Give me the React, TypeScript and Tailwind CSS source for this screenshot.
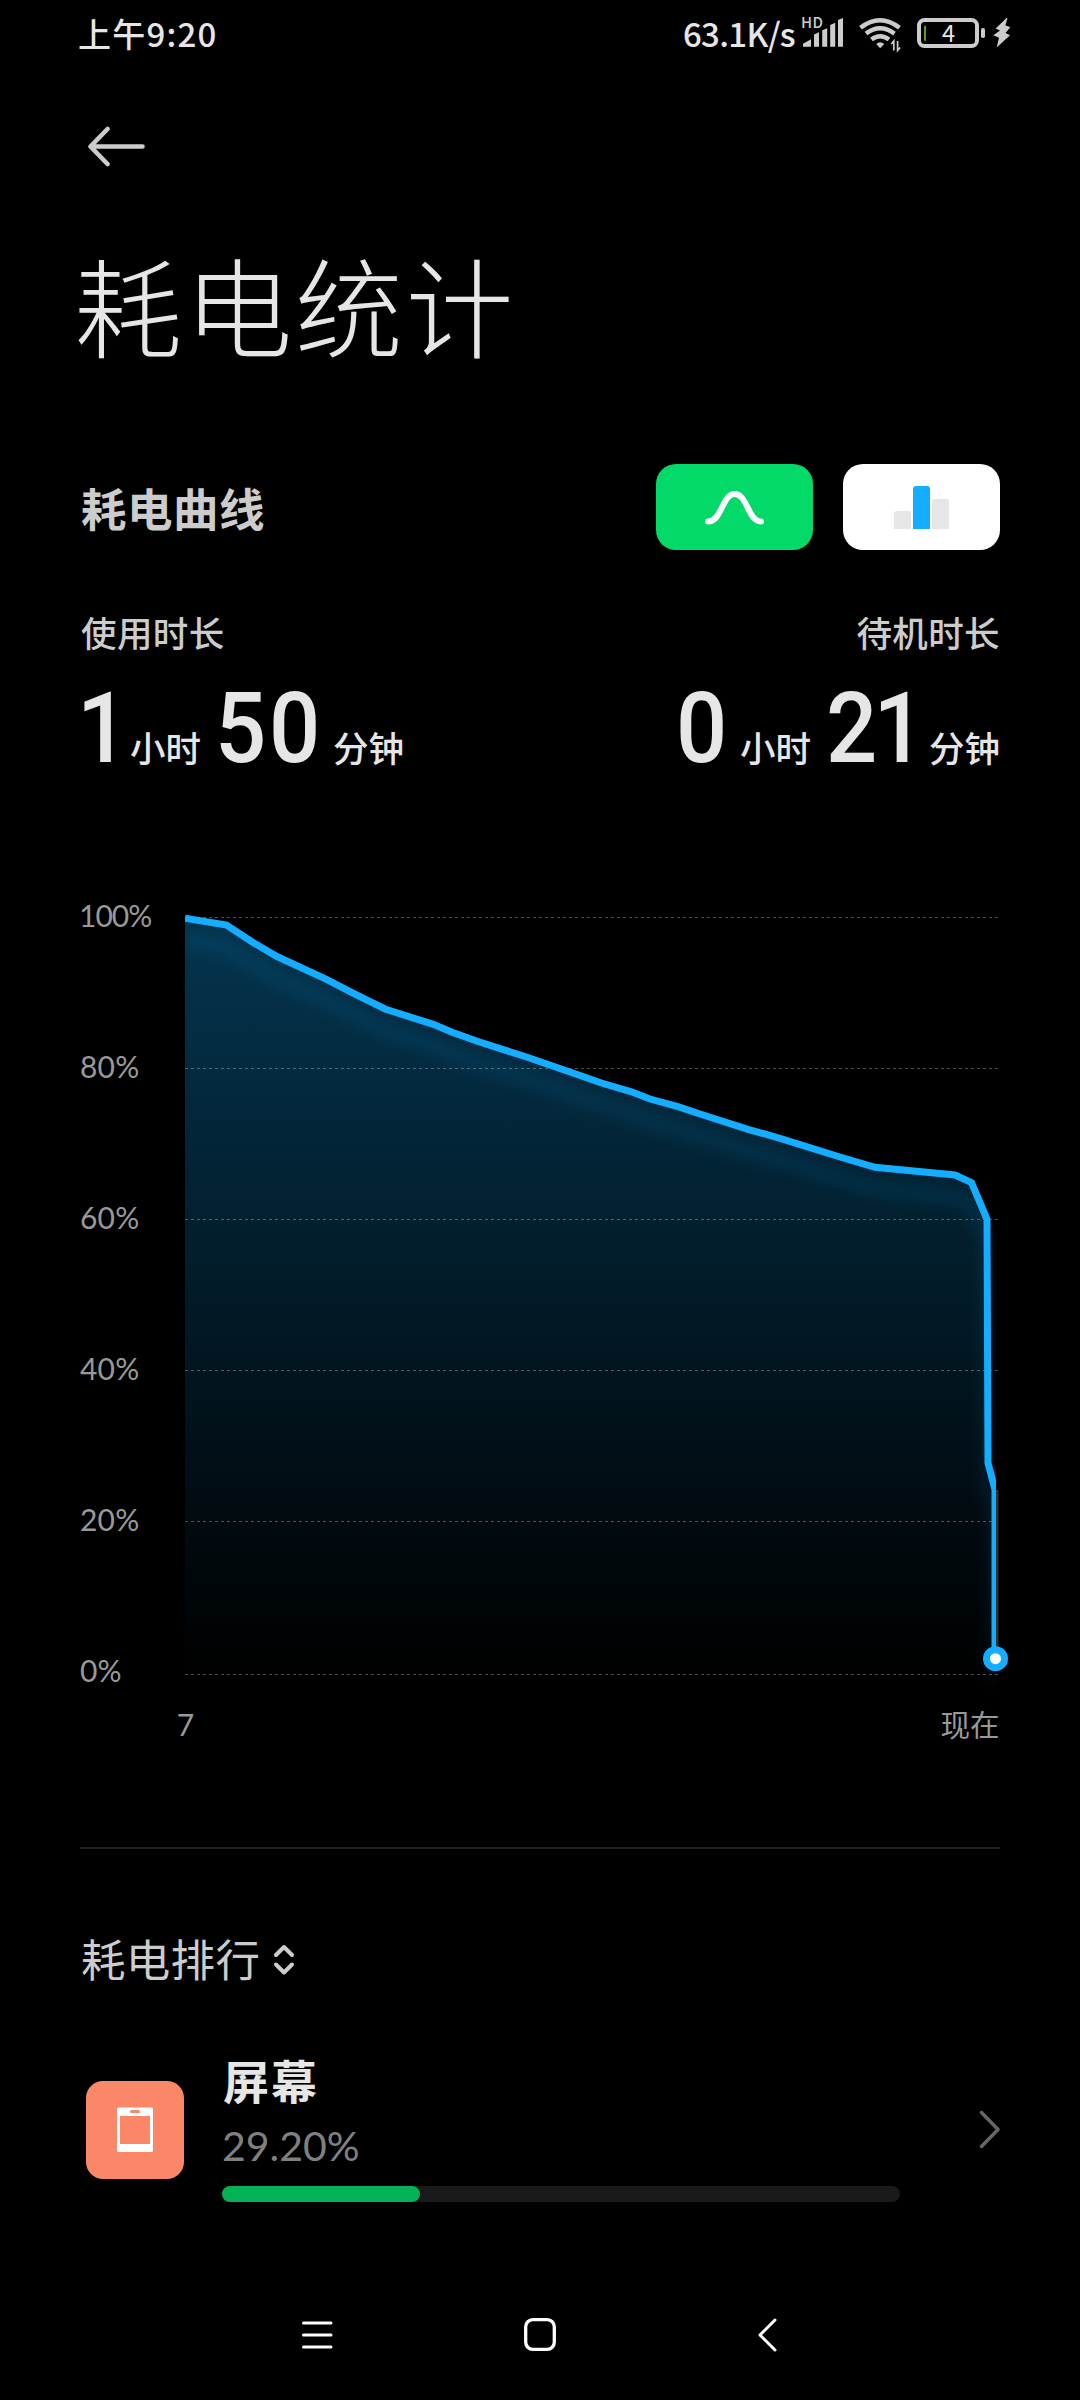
import type { ReactNode } from "react";

const gridLines = [917, 1068, 1219, 1370, 1521, 1674];

// Battery level over time, in screen pixels
const curve: [number, number][] = [
  [185, 918.3],
  [226.5, 925],
  [251.5, 941.5],
  [276.5, 956.3],
  [326.5, 979.3],
  [351.5, 992.3],
  [385, 1009],
  [433.3, 1024.3],
  [451.5, 1032],
  [476.5, 1041],
  [526.5, 1057],
  [570, 1072],
  [601.5, 1083],
  [631.5, 1091.8],
  [650, 1099],
  [678, 1106.7],
  [700, 1114],
  [748, 1129.3],
  [780, 1138.3],
  [840, 1157],
  [875, 1167.3],
  [955, 1175],
  [971.5, 1182.7],
  [987, 1219.3],
  [988, 1463],
  [995, 1489.5],
  [995, 1658],
];

const points = curve.map((p) => p.join(",")).join(" ");

function StatusBar() {
  return (
    <div className="flex h-[66px] items-center justify-between pr-[69px] pl-[78px] text-[#e6e6e6]">
      <span className="text-[33px] leading-[64px] font-medium tracking-[1.200px]">上午9:20</span>
      <div className="flex h-full items-center">
        <span className="text-[33px] leading-[64px] font-medium tracking-[-0.700px]">63.1K/s</span>
        <svg width="44" height="66" viewBox="800 0 44 66" fill="#ccc" className="ml-[5px]">
          <text x="801" y="28" fontSize="15" fontWeight="500" letterSpacing="0.3">HD</text>
          <path d="M803 46.700v-3l8-4.500v7.500zM814 46.700V34.500l5-2.200v14.400zM822.200 46.700V30.200l5-2v18.500zM830.200 46.700V25l5-2.200v23.900zM838 46.700V20l5-2v28.700z" />
        </svg>
        <svg width="44" height="66" viewBox="858 0 44 66" fill="none" stroke="#ccc" strokeWidth="4.400" className="ml-[14px]">
          <path d="M860.500 27.800q19.500-15 39 0M866 33.600q14-10.500 28.500 0M871.500 39.500q8.700-6.500 17.500 0" />
          <path d="M880.200 48.200l-4-4.200q4-3.400 8 0z" fill="#ccc" stroke="none" />
          <path d="M893.800 50.500v-9.500l-2.500 3M897.600 41v9.500l2.600-3" strokeWidth="1.700" />
        </svg>
        <svg width="96" height="66" viewBox="915 0 96 66" fill="none" className="ml-[13px]">
          <rect x="919" y="20" width="58" height="26" rx="5.500" stroke="#ccc" strokeWidth="4" />
          <rect x="924" y="25.500" width="2" height="15.500" rx="1" fill="#4fa31b" />
          <text x="948.500" y="41.800" fontSize="23.500" fontWeight="400" textAnchor="middle" fill="#e6e6e6">4</text>
          <rect x="981" y="28" width="4" height="10" rx="1.800" fill="#ccc" />
          <path d="M1006.500 18L995.700 28.500l4.300 2-6.700 4.800 5.700 2.500-2.300 9.700L1010 35.300l-4.500-2.300 4.800-5.700-5-2 2.200-7z" fill="#ccc" />
        </svg>
      </div>
    </div>
  );
}

function ModeButton({ className, children }: { className: string; children: ReactNode }) {
  return (
    <button className={`flex h-[86px] w-[157px] items-center justify-center rounded-[20px] ${className}`}>
      {children}
    </button>
  );
}

function Digits({ value, className }: { value: number; className: string }) {
  return (
    <span className={`font-[Roboto] text-[98px] leading-[96px] font-medium ${className}`}>
      <span className="inline-block origin-left scale-x-[0.92]">{value}</span>
    </span>
  );
}

function Unit({ children }: { children: ReactNode }) {
  return <span className="w-[71px] text-[35.500px] font-medium whitespace-nowrap">{children}</span>;
}

function BatteryChart() {
  return (
    <svg width="1080" height="880" viewBox="0 880 1080 880" className="block">
      <defs>
        <linearGradient id="area" x1="0" y1="917" x2="0" y2="1674" gradientUnits="userSpaceOnUse">
          <stop offset="0" stopColor="#0daaff" stopOpacity="0.31" />
          <stop offset="1" stopColor="#0daaff" stopOpacity="0" />
        </linearGradient>
        <filter id="glow" x="100" y="850" width="960" height="900" filterUnits="userSpaceOnUse">
          <feGaussianBlur stdDeviation="7" />
        </filter>
        <clipPath id="plot">
          <rect x="185" y="900" width="811" height="800" />
        </clipPath>
      </defs>
      <polygon points={`${points} 995,1674 185,1674`} fill="url(#area)" />
      <g clipPath="url(#plot)">
        <polyline
          points={points}
          transform="translate(0 22)"
          fill="none"
          stroke="#14adff"
          strokeOpacity="0.1"
          strokeWidth="13"
          filter="url(#glow)"
        />
      </g>
      {gridLines.map((y) => (
        <line key={y} x1="185" x2="998" y1={y + 0.5} y2={y + 0.5} stroke="#fff" strokeOpacity="0.3" strokeDasharray="3 3" />
      ))}
      <rect x="996" y="1490" width="2.500" height="168" fill="#333" />
      <g clipPath="url(#plot)">
        <polyline points={points} fill="none" stroke="#14adff" strokeWidth="7" />
      </g>
      <circle cx="995.500" cy="1658.700" r="9" fill="#fff" stroke="#14adff" strokeWidth="7" />
      <g fill="#999" className="font-[Lato]" fontSize="30">
        {gridLines.map((y, i) => (
          <text key={y} x={i === 0 ? 79 : 80} y={y + (i === 5 ? 7.5 : 9.5)} letterSpacing={i === 0 ? -1 : 0.2}>
            {100 - i * 20}%
          </text>
        ))}
        <text x="185.500" y="1736" textAnchor="middle">7</text>
      </g>
      <text x="999.500" y="1736" textAnchor="end" fontSize="29.500" fill="#999">现在</text>
    </svg>
  );
}

function RankItem({ name, percent }: { name: string; percent: number }) {
  return (
    <div className="flex h-[146px] items-start pr-[79px] pl-[86px]">
      <div className="mt-[25px] flex size-[98px] items-center justify-center rounded-[17px] bg-[#fa8768]">
        <svg width="38" height="46" viewBox="0 0 38 46">
          <path fillRule="evenodd" fill="#fff" d="M2.500 0.500h33q1.500 0 1.500 1.500v41.500q0 1.500-1.500 1.500h-33q-1.500 0-1.500-1.500v-41.500q0-1.500 1.500-1.500zM4 9v28h30v-28zM15.500 3q-1.500 0-1.500 1.500t1.500 1.500h7q1.500 0 1.500-1.500t-1.500-1.500z" />
        </svg>
      </div>
      <div className="ml-[38px] flex w-[678px] flex-col">
        <span className="-mt-[3px] ml-px text-[46px] leading-[52px] font-bold tracking-[2px] text-[#e6e6e6]">{name}</span>
        <span className="mt-[15px] font-[Lato] text-[41px] leading-[52px] text-[#808080]">{percent.toFixed(2)}%</span>
        <div className="mt-[14px] h-4 rounded-full bg-[#1a1a1a]">
          <div className="h-4 rounded-full bg-[#03b256]" style={{ width: `${percent}%` }} />
        </div>
      </div>
      <svg width="22" height="38" viewBox="0 0 22 38" fill="none" stroke="#666" strokeWidth="3.500" strokeLinecap="round" strokeLinejoin="round" className="mt-[54px] ml-auto">
        <path d="M2.500 2.500l16.500 17-16.500 17" />
      </svg>
    </div>
  );
}

export default function App() {
  return (
    <div className="flex h-[2400px] w-[1080px] flex-col overflow-hidden bg-black font-['Noto_Sans_CJK_SC',sans-serif]">
      <StatusBar />
      <header className="h-[314px]">
        <svg width="60" height="42" viewBox="0 0 60 42" fill="none" stroke="#ccc" strokeWidth="4.600" strokeLinecap="round" strokeLinejoin="round" className="mt-[59px] ml-[88px]">
          <path d="M19.500 4l-17 17.500 17 17.500M3 21.500h51.500" />
        </svg>
        <h1 className="mt-[71px] ml-[74px] text-[108px] leading-[130px] font-extralight tracking-[2.500px] text-[#e6e6e6]">耗电统计</h1>
      </header>
      <section className="mt-[84px] flex h-[86px] items-center justify-between px-[80px]">
        <h2 className="ml-px text-[45.500px] leading-[60px] font-bold tracking-[0.500px] text-[#ccc]">耗电曲线</h2>
        <div className="flex gap-[30px]">
          <ModeButton className="bg-[#03d968]">
            <svg width="60" height="36" viewBox="0 0 60 36" fill="none" stroke="#fff" strokeWidth="6" strokeLinecap="round" className="mt-[1px]">
              <path d="M3 31.500C17 31.500 17 4 29.700 4S43 31.500 56 31.500" />
            </svg>
          </ModeButton>
          <ModeButton className="bg-white">
            <div className="flex h-[43px] items-end gap-[2px]">
              <div className="h-[18px] w-[17px] rounded-t-[3px] bg-[#e6e6e6]" />
              <div className="h-[43px] w-[17px] rounded-t-[3px] bg-[#14adff]" />
              <div className="h-[30px] w-[17px] rounded-t-[3px] bg-[#e6e6e6]" />
            </div>
          </ModeButton>
        </div>
      </section>
      <section className="mt-[57px] flex h-[170px] justify-between px-[80px]">
        <div className="flex flex-col">
          <span className="ml-px text-[35.500px] leading-[50px] font-medium tracking-[0.400px] text-[#ccc]">使用时长</span>
          <div className="mt-[24px] flex h-[96px] items-baseline text-[#e6e6e6]">
            <Digits value={1} className="-ml-[3px] w-[42px]" />
            <span className="w-[11px]" />
            <Unit>小时</Unit>
            <Digits value={50} className="ml-[14px] w-[106px] tracking-[3px]" />
            <span className="w-[12px]" />
            <Unit>分钟</Unit>
          </div>
        </div>
        <div className="flex flex-col items-end">
          <span className="text-[35.500px] leading-[50px] font-medium tracking-[0.400px] text-[#ccc]">待机时长</span>
          <div className="mt-[24px] flex h-[96px] items-baseline text-[#e6e6e6]">
            <Digits value={0} className="w-[52px]" />
            <span className="w-[12px]" />
            <Unit>小时</Unit>
            <Digits value={21} className="ml-[15px] w-[91px] tracking-[-4px]" />
            <span className="w-[12px]" />
            <Unit>分钟</Unit>
          </div>
        </div>
      </section>
      <div className="mt-[103px] h-[880px]">
        <BatteryChart />
      </div>
      <div className="mx-[80px] mt-[87px] h-[2px] shrink-0 bg-[#1f1f1f]" />
      <div className="mt-[81px] flex h-[60px] items-center pl-[81px] text-[#ccc]">
        <span className="-mt-[4px] text-[44.500px] leading-[60px] tracking-[0.300px]">耗电排行</span>
        <svg width="22" height="32" viewBox="0 0 22 32" fill="none" stroke="#ccc" strokeWidth="4" strokeLinecap="round" strokeLinejoin="round" className="ml-[13px]">
          <path d="M3 11l8-8 8 8M3 20.500l8 8 8-8" />
        </svg>
      </div>
      <div className="mt-[66px]">
        <RankItem name="屏幕" percent={29.2} />
      </div>
      <nav className="mt-auto flex h-[130px] items-center pl-[301px]">
        <svg width="32" height="34" viewBox="0 0 32 34" stroke="#fff" strokeWidth="3" strokeLinecap="round">
          <path d="M2.500 5h27.500M2.500 17h27.500M2.500 29h27.500" />
        </svg>
        <svg width="34" height="36" viewBox="0 0 34 36" fill="none" stroke="#fff" strokeWidth="3.300" className="ml-[190px]">
          <rect x="2.700" y="2.700" width="28.600" height="29.600" rx="7" />
        </svg>
        <svg width="20" height="34" viewBox="0 0 20 34" fill="none" stroke="#fff" strokeWidth="3" strokeLinecap="round" strokeLinejoin="round" className="ml-[200px]">
          <path d="M18 2l-15 15 15 15" />
        </svg>
      </nav>
    </div>
  );
}
